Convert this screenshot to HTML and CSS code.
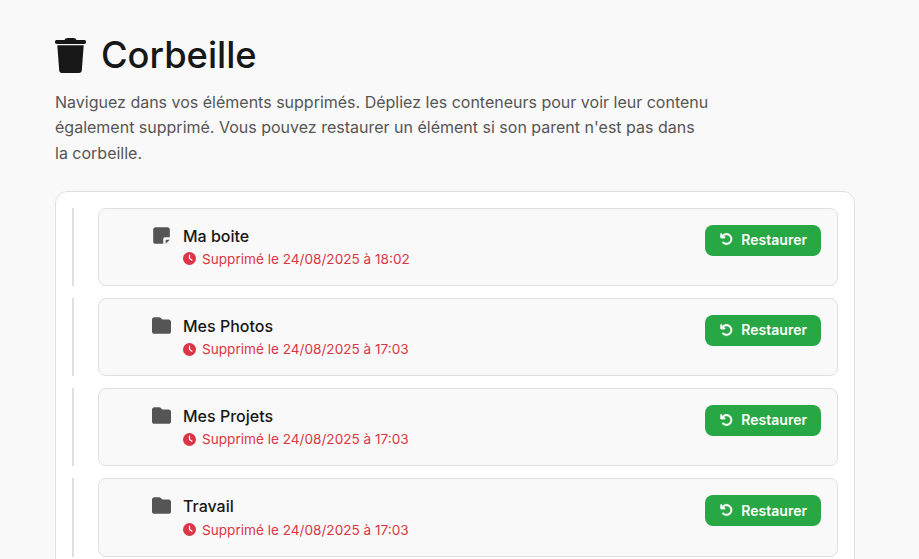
FILE: index.html
```html
<!DOCTYPE html>
<html lang="fr">
<head>
<meta charset="utf-8">
<title>Corbeille</title>
<link rel="stylesheet" href="styles.css">
</head>
<body>
<main class="page">
  <h1 class="title">
    <svg class="title-icon" viewBox="0 0 31 36"><path d="M9.500 3C10 1.800 11 1 12.500 1h6c1.500 0 2.500.8 3 2h7.800c1 0 1.700.7 1.700 1.700v.6c0 1-.7 1.700-1.700 1.700H1.700C.7 7 0 6.300 0 5.300v-.6C0 3.700.7 3 1.700 3z"/><path d="M2.300 8.300h26.400l-1.900 25.200c-.1 1.400-1.200 2.500-2.600 2.500H6.800c-1.400 0-2.500-1.100-2.600-2.500z"/></svg>
    Corbeille
  </h1>
  <p class="intro">Naviguez dans vos éléments supprimés. Dépliez les conteneurs pour voir leur contenu également supprimé. Vous pouvez restaurer un élément si son parent n'est pas dans la corbeille.</p>
  <section class="panel">
    <div class="row">
      <div class="item">
        <svg class="item-icon" viewBox="0 0 448 512"><path d="M64 32C28.700 32 0 60.700 0 96V416c0 35.300 28.700 64 64 64H272V352c0-26.500 21.500-48 48-48H448V96c0-35.300-28.700-64-64-64H64zM448 368H352c-8 0-16 8-16 16V480z"/></svg>
        <div class="info">
          <div class="name">Ma boite</div>
          <div class="date"><svg class="clock" viewBox="0 0 512 512"><path d="M256 0a256 256 0 1 1 0 512A256 256 0 1 1 256 0zM232 120V256c0 8 4 15.500 10.700 20l96 64c11 7.400 25.900 4.400 33.300-6.700s4.400-25.900-6.700-33.300L280 243.200V120c0-13.300-10.700-24-24-24s-24 10.700-24 24z"/></svg>Supprimé le 24/08/2025 à 18:02</div>
        </div>
        <button class="restore"><svg class="undo" viewBox="0 0 512 512"><path d="M125.700 160H176c17.700 0 32 14.300 32 32s-14.300 32-32 32H48c-17.700 0-32-14.300-32-32V64c0-17.700 14.300-32 32-32s32 14.300 32 32v51.200L97.600 97.600c87.500-87.500 229.300-87.500 316.800 0s87.500 229.300 0 316.800s-229.300 87.500-316.800 0c-12.500-12.500-12.500-32.800 0-45.300s32.800-12.500 45.300 0c62.500 62.500 163.800 62.500 226.300 0s62.500-163.800 0-226.300s-163.800-62.500-226.300 0L125.700 160z"/></svg>Restaurer</button>
      </div>
    </div>
    <div class="row">
      <div class="item">
        <svg class="item-icon" viewBox="0 0 512 512"><path d="M64 480H448c35.300 0 64-28.700 64-64V160c0-35.300-28.700-64-64-64H288c-10.100 0-19.600-4.700-25.600-12.800L243.200 57.600C231.100 41.500 212.100 32 192 32H64C28.700 32 0 60.700 0 96V416c0 35.300 28.700 64 64 64z"/></svg>
        <div class="info">
          <div class="name">Mes Photos</div>
          <div class="date"><svg class="clock" viewBox="0 0 512 512"><path d="M256 0a256 256 0 1 1 0 512A256 256 0 1 1 256 0zM232 120V256c0 8 4 15.500 10.700 20l96 64c11 7.400 25.900 4.400 33.300-6.700s4.400-25.900-6.700-33.300L280 243.200V120c0-13.300-10.700-24-24-24s-24 10.700-24 24z"/></svg>Supprimé le 24/08/2025 à 17:03</div>
        </div>
        <button class="restore"><svg class="undo" viewBox="0 0 512 512"><path d="M125.700 160H176c17.700 0 32 14.300 32 32s-14.300 32-32 32H48c-17.700 0-32-14.300-32-32V64c0-17.700 14.300-32 32-32s32 14.300 32 32v51.200L97.600 97.600c87.500-87.500 229.300-87.500 316.800 0s87.500 229.300 0 316.800s-229.300 87.500-316.800 0c-12.500-12.500-12.500-32.800 0-45.300s32.800-12.500 45.300 0c62.500 62.500 163.800 62.500 226.300 0s62.500-163.800 0-226.300s-163.800-62.500-226.300 0L125.700 160z"/></svg>Restaurer</button>
      </div>
    </div>
    <div class="row">
      <div class="item">
        <svg class="item-icon" viewBox="0 0 512 512"><path d="M64 480H448c35.300 0 64-28.700 64-64V160c0-35.300-28.700-64-64-64H288c-10.100 0-19.600-4.700-25.600-12.800L243.200 57.600C231.100 41.500 212.100 32 192 32H64C28.700 32 0 60.700 0 96V416c0 35.300 28.700 64 64 64z"/></svg>
        <div class="info">
          <div class="name">Mes Projets</div>
          <div class="date"><svg class="clock" viewBox="0 0 512 512"><path d="M256 0a256 256 0 1 1 0 512A256 256 0 1 1 256 0zM232 120V256c0 8 4 15.500 10.700 20l96 64c11 7.400 25.900 4.400 33.300-6.700s4.400-25.900-6.700-33.300L280 243.200V120c0-13.300-10.700-24-24-24s-24 10.700-24 24z"/></svg>Supprimé le 24/08/2025 à 17:03</div>
        </div>
        <button class="restore"><svg class="undo" viewBox="0 0 512 512"><path d="M125.700 160H176c17.700 0 32 14.300 32 32s-14.300 32-32 32H48c-17.700 0-32-14.300-32-32V64c0-17.700 14.300-32 32-32s32 14.300 32 32v51.200L97.600 97.600c87.500-87.500 229.300-87.500 316.800 0s87.500 229.300 0 316.800s-229.300 87.500-316.800 0c-12.500-12.500-12.500-32.800 0-45.300s32.800-12.500 45.300 0c62.500 62.500 163.800 62.500 226.300 0s62.500-163.800 0-226.300s-163.800-62.500-226.300 0L125.700 160z"/></svg>Restaurer</button>
      </div>
    </div>
    <div class="row">
      <div class="item">
        <svg class="item-icon" viewBox="0 0 512 512"><path d="M64 480H448c35.300 0 64-28.700 64-64V160c0-35.300-28.700-64-64-64H288c-10.100 0-19.600-4.700-25.600-12.800L243.200 57.600C231.100 41.500 212.100 32 192 32H64C28.700 32 0 60.700 0 96V416c0 35.300 28.700 64 64 64z"/></svg>
        <div class="info">
          <div class="name">Travail</div>
          <div class="date"><svg class="clock" viewBox="0 0 512 512"><path d="M256 0a256 256 0 1 1 0 512A256 256 0 1 1 256 0zM232 120V256c0 8 4 15.500 10.700 20l96 64c11 7.400 25.900 4.400 33.300-6.700s4.400-25.900-6.700-33.300L280 243.200V120c0-13.300-10.700-24-24-24s-24 10.700-24 24z"/></svg>Supprimé le 24/08/2025 à 17:03</div>
        </div>
        <button class="restore"><svg class="undo" viewBox="0 0 512 512"><path d="M125.700 160H176c17.700 0 32 14.300 32 32s-14.300 32-32 32H48c-17.700 0-32-14.300-32-32V64c0-17.700 14.300-32 32-32s32 14.300 32 32v51.200L97.600 97.600c87.500-87.500 229.300-87.500 316.800 0s87.500 229.300 0 316.800s-229.300 87.500-316.800 0c-12.500-12.500-12.500-32.800 0-45.300s32.800-12.500 45.300 0c62.500 62.500 163.800 62.500 226.300 0s62.500-163.800 0-226.300s-163.800-62.500-226.300 0L125.700 160z"/></svg>Restaurer</button>
      </div>
    </div>
  </section>
</main>
</body>
</html>
```

FILE: styles.css
```css
* { box-sizing: border-box; }
html, body { height: 100%; }
body {
  margin: 0;
  overflow: hidden;
  background: #f9f9f9;
  color: #171717;
  font-family: Inter, sans-serif;
}
.page { padding: 33px 55px 0; }
.title {
  display: flex;
  align-items: center;
  gap: 15px;
  margin: 0 0 12.700px;
  font-size: 36.300px;
  line-height: 44px;
  font-weight: 550;
}
.title-icon { width: 31px; height: 36px; fill: #171717; flex: none; }
.intro {
  width: 656px;
  margin: 0 0 24.200px;
  font-size: 16px;
  line-height: 25.600px;
  color: #555;
}
.panel {
  width: 800px;
  padding: 16px;
  border: 1px solid #e0e0e0;
  border-radius: 12px;
  background: #fff;
}
.row {
  padding-left: 24px;
  border-left: 2px solid #e0e0e0;
  margin-bottom: 12px;
}
.item {
  display: flex;
  align-items: flex-start;
  padding: 16px 16px 16px 53px;
  border: 1px solid #e0e0e0;
  border-radius: 8px;
  background: #f9f9f9;
}
.item-icon { width: 19px; height: 19px; margin-top: 1px; margin-right: 12px; fill: #555; flex: none; }
.info { flex: 1; }
.name { margin-bottom: 1.150px; font-size: 16px; line-height: 23px; font-weight: 500; }
.date { display: flex; align-items: center; gap: 6px; font-size: 13.600px; line-height: 20.100px; color: #dc3545; }
.clock { width: 13px; height: 13px; fill: #dc3545; }
.restore {
  display: flex;
  align-items: center;
  gap: 8px;
  height: 31px;
  padding: 0 14px 1.600px 15px;
  border: 0;
  border-radius: 8px;
  background: #28a745;
  color: #fff;
  font: 600 14px Inter, sans-serif;
}
.undo { width: 13px; height: 14px; fill: #fff; stroke: #fff; stroke-width: 14px; }
```
